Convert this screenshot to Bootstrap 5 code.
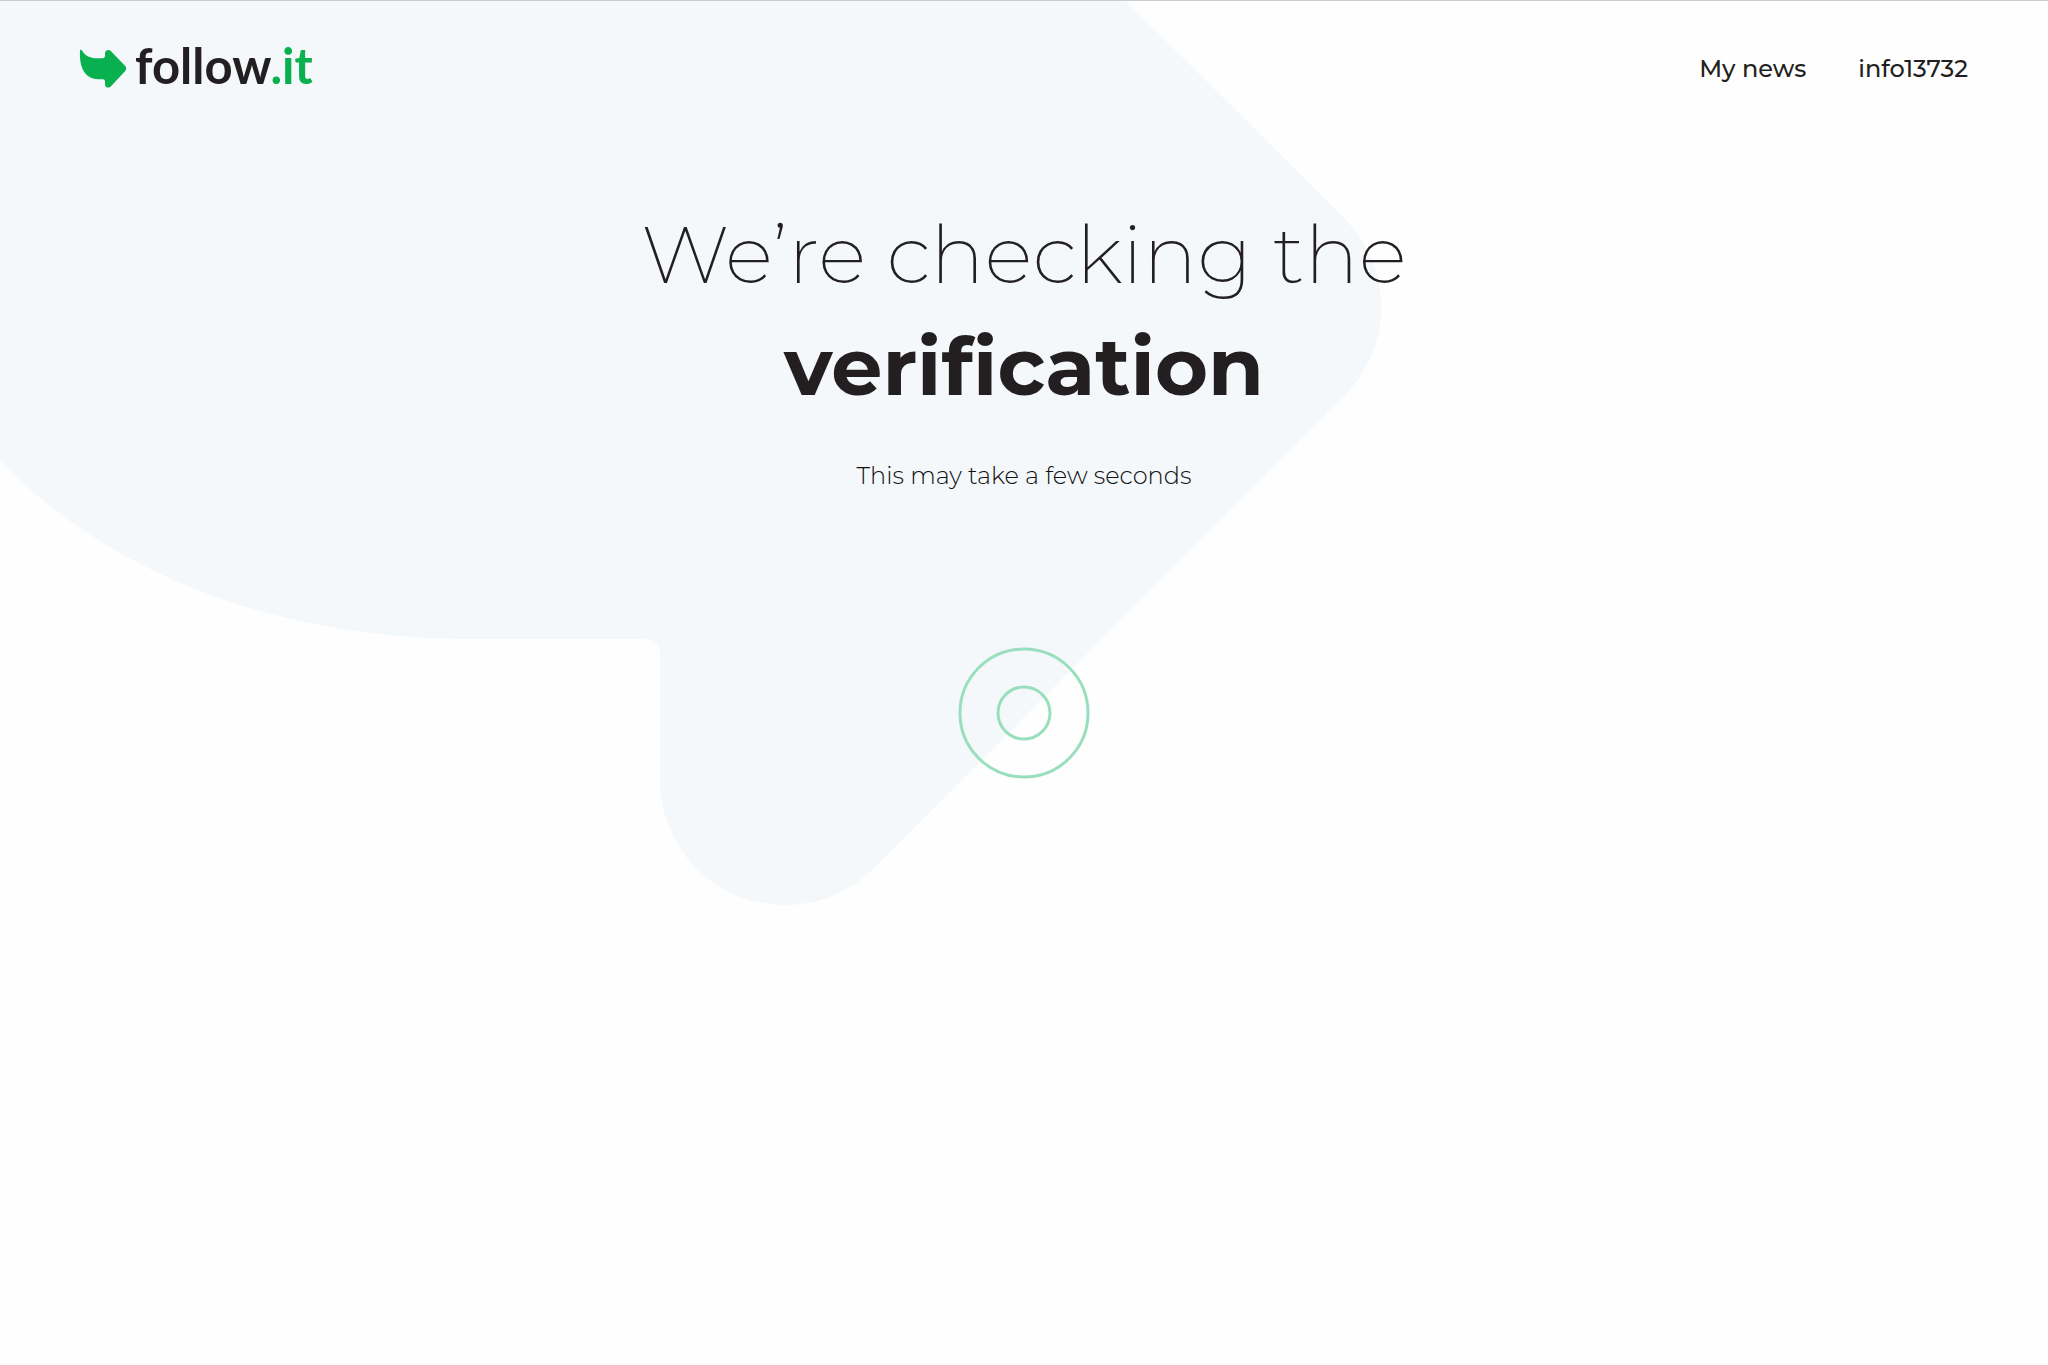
<!DOCTYPE html>
<html lang="en">
<head>
<meta charset="utf-8">
<meta name="viewport" content="width=device-width, initial-scale=1">
<title>follow.it</title>
<link href="https://cdn.jsdelivr.net/npm/bootstrap@5.3.0/dist/css/bootstrap.min.css" rel="stylesheet">
<style>
  body { font-family: Montserrat, Inter, "Open Sans", sans-serif; color: #231f20; border-top: 1px solid #cbcccd; background: #fefefe; }
  .backdrop { z-index: -1; }
  .site-bar { padding: 40px 80px 40px 79px; }
  .brand { font-family: Lato, sans-serif; font-weight: 700; font-size: 49px; line-height: 48px; color: #231f20; gap: 8px; }
  .brand-name { padding-bottom: 8px; }
  .brand-tld { color: #09b04f; }
  .site-links { gap: 52px; font-size: 24px; line-height: 32px; font-weight: 500; }
  .site-links a { color: #231f20; }
  .headline { font-size: 81px; line-height: 112px; font-weight: 200; font-variant-ligatures: none; margin-top: 61px; }
  .headline strong { font-weight: 700; }
  .subline { font-size: 24px; line-height: 36px; font-weight: 300; color: #111; margin-top: 36px; }
  .loader { margin-top: 153px; }
</style>
</head>
<body>
<svg class="backdrop position-absolute top-0 start-0 w-100" viewBox="0 0 2048 908" aria-hidden="true">
  <path fill="#f4f8fa" d="M0 0H1125L1344 218A125 125 0 0 1 1344 396L873 869A125 125 0 0 1 660 781V655Q660 639 644 639H470C290 639 118 582 0 461Z"/>
</svg>
<header class="site-bar d-flex justify-content-between align-items-center">
  <a class="brand d-flex align-items-center text-decoration-none" href="#">
    <svg width="48" height="40" viewBox="0 0 48 37" preserveAspectRatio="none" aria-hidden="true">
      <path fill="#09b04f" d="M1 2C1 .5 2.500 .5 3 1.500C6 6 10 8 15 8.500H24Q26 8.500 26 6.500V4C26 1 30 0 32 2L46 15.500Q48.500 18 46 20.500L32 34.500C30 36.500 26 36 26 32.500V30Q26 28 24 28H19C7 27.500 0 19 1 2Z"/>
    </svg>
    <span class="brand-name">follow<span class="brand-tld">.it</span></span>
  </a>
  <nav class="site-links d-flex">
    <a class="text-decoration-none" href="#">My news</a>
    <a class="text-decoration-none" href="#">info13732</a>
  </nav>
</header>
<main class="text-center">
  <h1 class="headline mb-0">We’re checking the<br><strong>verification</strong></h1>
  <p class="subline mb-0">This may take a few seconds</p>
  <svg class="loader" width="132" height="132" viewBox="0 0 132 132" fill="none" stroke="#99dfbd" stroke-width="3" role="img" aria-label="Loading">
    <circle cx="66" cy="66" r="64"/>
    <circle cx="66" cy="66" r="26"/>
  </svg>
</main>
<script src="https://cdn.jsdelivr.net/npm/bootstrap@5.3.0/dist/js/bootstrap.bundle.min.js"></script>
</body>
</html>
